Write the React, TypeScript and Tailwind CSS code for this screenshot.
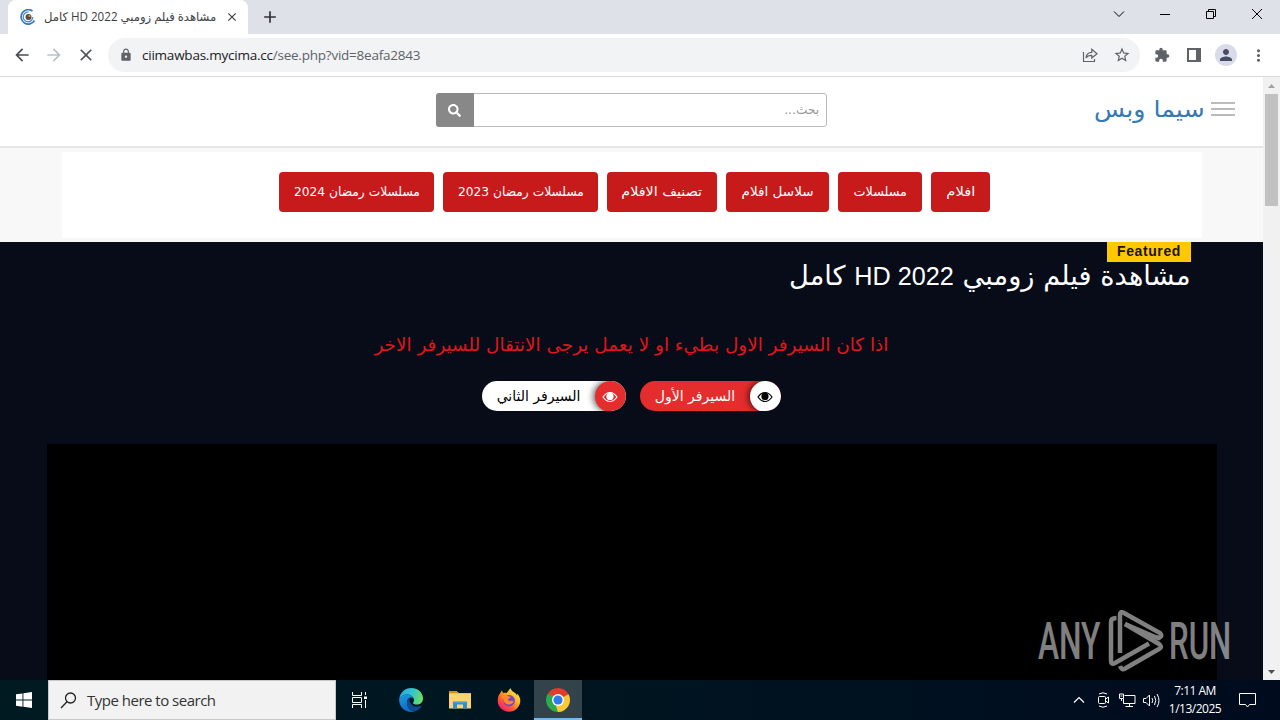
import type { ReactNode } from "react";
import {
  MdAdd,
  MdArrowBack,
  MdArrowForward,
  MdClose,
  MdExtension,
  MdLock,
  MdMoreVert,
  MdPerson,
  MdStarBorder,
} from "react-icons/md";
import { FaSearch } from "react-icons/fa";

const navLinks = [
  { label: "افلام", box: "w-[59px]", text: "scale-x-[1.13]" },
  { label: "مسلسلات", box: "w-[84px]", text: "scale-x-[0.98]" },
  { label: "سلاسل افلام", box: "w-[103px]", text: "scale-x-[1.04]" },
  { label: "تصنيف الافلام", box: "w-[110px]", text: "scale-x-[1.1]" },
  { label: "مسلسلات رمضان 2023", box: "w-[155px]", text: "scale-x-[0.94]" },
  { label: "مسلسلات رمضان 2024", box: "w-[155px]", text: "scale-x-[0.94]" },
];

const EyeIcon = () => (
  <svg width="16" height="12" viewBox="0 0 16 12" fill="none">
    <path
      d="M1 6Q4 1.500 8 1.500T15 6Q12 10.500 8 10.500T1 6Z"
      stroke="currentColor"
      strokeWidth="1.2"
    />
    <circle cx="8" cy="5.400" r="3.600" fill="currentColor" />
  </svg>
);

const EdgeIcon = () => (
  <svg width="24" height="24" viewBox="0 0 24 24">
    <defs>
      <linearGradient id="edge-top" x1="0" y1="0.3" x2="1" y2="0.5">
        <stop offset="0" stopColor="#2aa9e6" />
        <stop offset="0.55" stopColor="#36c5c8" />
        <stop offset="1" stopColor="#6ee05c" />
      </linearGradient>
      <linearGradient id="edge-low" x1="0" y1="0" x2="0.4" y2="1">
        <stop offset="0" stopColor="#1b9de2" />
        <stop offset="1" stopColor="#1267c0" />
      </linearGradient>
    </defs>
    <path
      d="M0.2 11C1 4.500 6 0 12.200 0C19 0 24 4.800 24 10.400C24 14.200 21 16.600 17.800 16.600C15.500 16.600 14 15.800 14 15C14 14.400 15 14 15 12C15 9 11.800 6.500 8 6.500C4.500 6.500 1.600 8.300 0.200 11Z"
      fill="url(#edge-top)"
    />
    <path
      d="M0.200 11C1.800 7.800 5 6.500 8 6.500C11.500 6.500 14.400 8.500 14.900 11C13.800 9.800 12.500 9.400 11.500 9.600C9 10.100 7.900 12.500 8 15C8.200 19.500 11.500 23 16 23.300C14.800 23.800 13.400 24 12 24C5.300 24 -0.400 18.500 0.200 11Z"
      fill="url(#edge-low)"
    />
    <path
      d="M8 15C7.900 12.500 9 10.500 10.600 9.900C9.500 14 13 18.600 18 18.700C20 18.700 21.300 18 22.300 17.500C22.700 17.400 22.900 17.700 22.700 18C21.300 20.600 19 22.600 16 23.300C11.500 23 8.200 19.500 8 15Z"
      fill="#0c4c91"
    />
  </svg>
);

const FolderIcon = () => (
  <svg width="22" height="20" viewBox="0 0 22 20">
    <path d="M0 1.500H8L10 3H22V8H0Z" fill="#e8a33d" />
    <rect y="3.500" width="22" height="15" fill="#fbd66f" />
    <path d="M0 1H8V3H0Z" fill="#d98e1e" />
    <path d="M4 18.500V12.500Q4 11 5.500 11H16.500Q18 11 18 12.500V18.500H14V14.500H8V18.500Z" fill="#2f8fd4" />
    <path d="M5 11H17V12.500H5Z" fill="#69b6ea" />
  </svg>
);

const FirefoxIcon = () => (
  <svg width="24" height="24" viewBox="0 0 24 24">
    <defs>
      <linearGradient id="fox" x1="0.85" y1="0.1" x2="0.15" y2="0.95">
        <stop offset="0" stopColor="#fff04a" />
        <stop offset="0.35" stopColor="#ffb01f" />
        <stop offset="0.65" stopColor="#ff5b32" />
        <stop offset="1" stopColor="#f0186c" />
      </linearGradient>
    </defs>
    <path
      d="M3.600 4.500C4 3.500 4.600 2.700 5 2.400C5.100 3.500 5.600 4.300 6.300 5C7.500 4.600 8.500 4.600 9.400 4.900C11 3.800 11.500 2 13.800 0.300C14 2.200 15.300 3.400 17 4.300C19.200 5.600 19.500 6.500 20.100 7.800C20.300 7 20.200 6.300 20 5.500C22.200 7.600 23.400 10.300 23.300 13C23 19.200 18 23.700 12 23.700C5.600 23.700 0.700 18.800 0.700 12.500C0.700 9.300 1.800 6.700 3.600 4.500Z"
      fill="url(#fox)"
    />
    <circle cx="12.200" cy="12.800" r="5.700" fill="#7642d8" />
    <path
      d="M4.500 9C6.500 7 9.300 7 11 8C11.800 8.500 12.700 8.500 13.700 8.700C13.500 10 12.300 10.400 11 10.800C10.700 12.500 12.300 13.300 14 12.800C15.600 12.500 16.600 13 16.400 13.700C15.500 15.800 13 17 10.500 16.300C7.200 15.500 6.200 12.800 6.700 10.500Z"
      fill="#ff8a22"
    />
  </svg>
);

const ChromeIcon = () => (
  <svg width="24" height="24" viewBox="0 0 24 24">
    <path d="M12 12L1.608 6A12 12 0 0 1 22.392 6Z" fill="#e33b2e" />
    <path d="M12 12L22.392 6A12 12 0 0 1 12 24Z" fill="#fcc934" />
    <path d="M12 12L12 24A12 12 0 0 1 1.608 6Z" fill="#2da94f" />
    <path d="M12 6.500H22.650L22.392 6L12 5Z" fill="#e33b2e" />
    <path d="M16.760 14.750L12 24L10 18Z" fill="#fcc934" />
    <path d="M7.240 14.750L1.608 6L9 8Z" fill="#2da94f" />
    <circle cx="12" cy="12" r="6" fill="#fff" />
    <circle cx="12" cy="12" r="4.600" fill="#2f7bea" />
  </svg>
);

const AppSlot = ({ children, active }: { children: ReactNode; active?: boolean }) => (
  <div
    className={
      active
        ? "ml-0.5 flex h-full w-12 items-center justify-center border-b-2 border-[#76b9ed] bg-[#32434b] pt-0.5"
        : "flex h-full w-[49px] items-center justify-center"
    }
  >
    {children}
  </div>
);

const TabStrip = () => (
  <div className="flex h-[34px] shrink-0 items-stretch bg-[#dee1e8] pl-2">
    <div className="flex w-60 items-center rounded-t-lg bg-white pl-3">
      <svg width="16" height="16" viewBox="0 0 16 16" fill="none">
        <path d="M12.500 2A7.200 7.200 0 1 0 14.500 11.500" stroke="#3478c9" strokeWidth="1.700" />
        <path d="M8.500 3.200A4.800 4.800 0 1 0 12.800 8" stroke="#4b8bd4" strokeWidth="1.300" />
        <circle cx="8.500" cy="8" r="3" fill="#5a4940" />
        <circle cx="9.500" cy="7" r="1" fill="#d8a878" />
      </svg>
      <div className="ml-2 flex w-[172px] justify-end text-[#3c4043]">
        <span
          dir="rtl"
          className="origin-right scale-x-[0.967] whitespace-nowrap font-['Open_Sans','DejaVu_Sans',sans-serif] text-xs"
        >
          مشاهدة فيلم زومبي 2022 HD كامل
        </span>
      </div>
      <MdClose className="ml-[9px] size-[14px] text-[#3c4043]" />
    </div>
    <MdAdd className="ml-3 mt-[7px] size-5 text-[#303236]" />
    <div className="ml-auto flex items-center gap-[34px] pr-[17px] pb-1.5 text-black">
      <svg width="12" height="12" viewBox="0 0 12 12" fill="none" stroke="currentColor">
        <path d="M1 3.500L6 8.500L11 3.500" />
      </svg>
      <svg width="12" height="12" viewBox="0 0 12 12" fill="none" stroke="currentColor">
        <path d="M1 6.500H11" />
      </svg>
      <svg width="12" height="12" viewBox="0 0 12 12" fill="none" stroke="currentColor">
        <path d="M1.500 3.500H8.500V10.500H1.500ZM3.500 3.500V1.500H10.500V8.500H8.500" />
      </svg>
      <svg width="12" height="12" viewBox="0 0 12 12" fill="none" stroke="currentColor">
        <path d="M1 1L11 11M11 1L1 11" />
      </svg>
    </div>
  </div>
);

const Toolbar = () => (
  <div className="flex h-[43px] shrink-0 items-center border-b border-[#d7d9dc] bg-white pl-3 text-[#5f6368]">
    <MdArrowBack className="size-5 text-[#4b4e52]" />
    <MdArrowForward className="ml-3 size-5 text-[#bdc1c6]" />
    <MdClose className="ml-3 size-5 text-[#505357]" />
    <div className="ml-3 flex h-[34px] w-[1032px] items-center rounded-full bg-[#f1f3f4] pl-[11px] pr-[9px]">
      <MdLock className="size-[14px]" />
      <div className="ml-[9px] whitespace-nowrap font-['Open_Sans',sans-serif] text-[13.5px] tracking-[-0.23px]">
        <span className="text-[#202124]">ciimawbas.mycima.cc</span>/see.php?vid=8eafa2843
      </div>
      <svg
        className="ml-auto"
        width="16"
        height="16"
        viewBox="0 0 16 16"
        fill="none"
        stroke="currentColor"
        strokeWidth="1.200"
      >
        <path d="M1.500 5V14.500H12.500V12" />
        <path d="M4 11C4.300 7.500 6.500 5.500 9.800 5.400V2.300L15 6.800L9.800 11V8.300C7.300 8.200 5.300 9 4 11Z" />
      </svg>
      <MdStarBorder className="ml-[15px] size-[18px]" />
    </div>
    <MdExtension className="ml-[14px] size-4" />
    <svg className="ml-[17px]" width="14" height="14" viewBox="0 0 14 14">
      <path d="M0 0H14V14H0ZM2 2V12H9V2Z" fill="currentColor" fillRule="evenodd" />
    </svg>
    <div className="ml-[14px] flex size-[22px] items-center justify-center rounded-full bg-[#d9dce8]">
      <MdPerson className="size-[18px] text-[#474b63]" />
    </div>
    <MdMoreVert className="ml-3 size-[19px]" />
  </div>
);

const SiteHeader = () => (
  <header className="flex h-[71px] items-start border-b-2 border-[#e7e7e7] bg-white pt-4">
    <div className="ml-[436px] flex h-[34px] w-[391px] overflow-hidden rounded-[3px]">
      <div className="flex w-[38px] items-center justify-center bg-[#888] pr-px">
        <FaSearch className="size-[13px] text-white" />
      </div>
      <div className="flex flex-1 items-center justify-end rounded-r-[3px] border border-l-0 border-[#bbb] pr-[7px]">
        <span
          dir="rtl"
          className="origin-right scale-x-[0.94] font-['DejaVu_Sans',sans-serif] text-[13px] text-[#999]"
        >
          بحث...
        </span>
      </div>
    </div>
    <div className="ml-auto mr-7 flex h-8 items-center gap-1.5">
      <span
        dir="rtl"
        className="origin-right scale-x-[1.1] whitespace-nowrap font-['DejaVu_Sans',sans-serif] text-[23px] leading-8 text-[#337ab7]"
      >
        سيما وبس
      </span>
      <div className="flex w-6 flex-col gap-1">
        <div className="h-0.5 bg-[#bbb]" />
        <div className="h-0.5 bg-[#bbb]" />
        <div className="h-0.5 bg-[#bbb]" />
      </div>
    </div>
  </header>
);

const SiteNav = () => (
  <div className="h-[94px] bg-[#f8f8f8] pl-[62px] pr-[61px] pt-1">
    <nav dir="rtl" className="flex h-[86px] justify-start gap-[9px] bg-white pr-[212px] pt-5">
      {navLinks.map((link) => (
        <div
          key={link.label}
          className={`flex h-10 shrink-0 items-center justify-center rounded bg-[#c71a1b] text-white ${link.box}`}
        >
          <span
            className={`whitespace-nowrap font-['DejaVu_Sans',sans-serif] text-[13px] ${link.text}`}
          >
            {link.label}
          </span>
        </div>
      ))}
    </nav>
  </div>
);

const Movie = () => (
  <main className="flex flex-1 flex-col bg-[#070c18] text-white">
    <div className="mr-[72px] flex flex-col items-end">
      <div className="flex h-5 w-[84px] items-center justify-center bg-[#ffc800] pb-0.5 font-['Liberation_Sans',sans-serif] text-sm font-bold tracking-[0.6px] text-[#1b1305]">
        Featured
      </div>
      <h1
        dir="rtl"
        className="h-7 origin-right scale-x-[1.01] whitespace-nowrap font-['DejaVu_Sans',sans-serif] text-[27px] leading-7"
      >
        مشاهدة فيلم زومبي{" "}
        <span className="font-['Liberation_Sans',sans-serif] text-[25px]">2022 HD</span> كامل
      </h1>
    </div>
    <p
      dir="rtl"
      className="mt-[41px] h-7 whitespace-nowrap text-center font-['DejaVu_Sans',sans-serif] text-lg leading-7 text-[#e3141b]"
    >
      <span className="inline-block scale-x-[1.022]">
        اذا كان السيرفر الاول بطيء او لا يعمل يرجى الانتقال للسيرفر الاخر
      </span>
    </p>
    <div className="mt-[22px] flex h-[30px] justify-center gap-[14px] font-['DejaVu_Sans',sans-serif] text-sm">
      <div className="flex w-36 overflow-hidden rounded-full bg-white text-black">
        <div dir="rtl" className="flex flex-1 items-center justify-center">
          <span className="whitespace-nowrap">السيرفر الثاني</span>
        </div>
        <div className="flex size-[31px] items-center justify-center rounded-full bg-[#e52d2d] pr-px text-white shadow-[-2px_0_6px_#0009]">
          <EyeIcon />
        </div>
      </div>
      <div className="flex w-[141px] overflow-hidden rounded-full bg-[#e52d2d]">
        <div dir="rtl" className="flex flex-1 items-center justify-center">
          <span className="whitespace-nowrap">السيرفر الأول</span>
        </div>
        <div className="flex size-[31px] items-center justify-center rounded-full bg-white pr-px text-black shadow-[-2px_0_6px_#0009]">
          <EyeIcon />
        </div>
      </div>
    </div>
    <div className="mx-auto mt-[33px] w-[1170px] flex-1 bg-black" />
  </main>
);

const Scrollbar = () => (
  <div className="flex w-[17px] flex-col items-center bg-[#f1f1f1]">
    <svg width="17" height="17" viewBox="0 0 17 17" fill="#a3a3a3">
      <path d="M5 11H12L8.500 7Z" />
    </svg>
    <div className="h-[112px] w-[13px] bg-[#c1c1c1]" />
    <svg className="mt-auto" width="17" height="17" viewBox="0 0 17 17" fill="#505050">
      <path d="M5 7H12L8.500 11Z" />
    </svg>
  </div>
);

const Watermark = () => (
  <div className="absolute left-[1038px] top-[609px] flex h-16 w-[194px] items-center justify-between font-['Roboto',sans-serif] text-[52px] font-medium leading-none text-white opacity-50">
    <span className="w-[65px] origin-left scale-x-[0.61] pt-0.5">ANY</span>
    <svg width="56" height="62" viewBox="0 0 56 62" fill="none" stroke="currentColor" strokeWidth="4.500">
      <path d="M8.500 8Q3 8 3 12V51Q3 55 7 53L41 33.500" />
      <path d="M12 43V5Q12 0.500 16 3L52 23Q55 26 51 28L47 27L17 14" />
      <path d="M17 14L51 34Q55 37 51 39L18 58Q14 61 12 56" />
    </svg>
    <span className="w-[63px] origin-left scale-x-[0.6] pt-0.5">RUN</span>
  </div>
);

const Taskbar = () => (
  <div className="flex h-10 shrink-0 items-center bg-linear-to-r from-[#001a22] via-[#001420] to-[#000b1e] text-white">
    <div className="flex w-12 items-center justify-center">
      <svg width="16" height="16" viewBox="0 0 16 16" fill="#fff">
        <path d="M0 2.300L6.500 1.400V7.600H0ZM7.400 1.300L16 0V7.600H7.400ZM0 8.500H6.500V14.700L0 13.800ZM7.400 8.500H16V16L7.400 14.800Z" />
      </svg>
    </div>
    <div className="flex h-10 w-72 items-center border border-[#c8c8c8] bg-[#f2f2f2] pl-[11px] text-[#333]">
      <svg width="17" height="17" viewBox="0 0 17 17" fill="none" stroke="#222" strokeWidth="1.300">
        <circle cx="10.500" cy="6" r="5" />
        <path d="M7 9.700L1 16" />
      </svg>
      <span className="ml-2.5 font-['Open_Sans',sans-serif] text-[15px] tracking-[-0.5px]">
        Type here to search
      </span>
    </div>
    <AppSlot>
      <svg className="mr-0.5" width="17" height="16" viewBox="0 0 17 16" fill="none" stroke="#fff">
        <path d="M1.500 0V3.500H10.500V0M1.500 5.500H10.500V10.500H1.500ZM1.500 16V12.500H10.500V16M14.500 0V3M14.500 8V16" />
        <path d="M13 4.500H16V7H13Z" fill="#fff" stroke="none" />
      </svg>
    </AppSlot>
    <AppSlot>
      <div className="pl-0.5">
        <EdgeIcon />
      </div>
    </AppSlot>
    <AppSlot>
      <div className="pl-0.5">
        <FolderIcon />
      </div>
    </AppSlot>
    <AppSlot>
      <div className="pl-0.5">
        <FirefoxIcon />
      </div>
    </AppSlot>
    <AppSlot active>
      <ChromeIcon />
    </AppSlot>
    <div className="ml-auto flex h-full items-center pr-6">
      <svg width="12" height="8" viewBox="0 0 12 8" fill="none" stroke="#fff" strokeWidth="1.200">
        <path d="M1 6.500L6 1.500L11 6.500" />
      </svg>
      <svg className="ml-3" width="13" height="16" viewBox="0 0 13 16" fill="none" stroke="#fff">
        <path d="M1.500 5.500Q1.500 4.500 2.500 4.500H7.500Q8.500 4.500 8.500 5.500V10.500Q8.500 11.500 7.500 11.500H2.500Q1.500 11.500 1.500 10.500ZM8.500 7L11.500 5V11L8.500 9M2 2Q6 -0.500 10 2M2 14Q6 16.500 10 14" />
      </svg>
      <svg className="ml-[9px]" width="17" height="15" viewBox="0 0 17 15" fill="none" stroke="#fff">
        <path d="M5.500 2.500H16V10.500H4.500V6M10.500 10.500V13.500M6.500 13.500H14M0.500 1V5.500H4.500V1ZM1.500 3H3.500M2.500 5.500V8" />
      </svg>
      <svg className="ml-[7px]" width="17" height="15" viewBox="0 0 17 15" fill="none" stroke="#fff">
        <path d="M0.500 5.500H3L6.500 2V13L3 9.500H0.500ZM9 5Q10.500 7.500 9 10M11.500 3Q14 7.500 11.500 12M14 1Q18 7.500 14 14" />
      </svg>
      <div className="ml-2 flex w-[54px] flex-col items-center whitespace-nowrap font-['Open_Sans',sans-serif] text-xs leading-[18px] tracking-[-0.5px]">
        <span>7:11 AM</span>
        <span>1/13/2025</span>
      </div>
      <svg className="ml-[17px]" width="17" height="17" viewBox="0 0 17 17" fill="none" stroke="#fff">
        <path d="M0.500 1.500H16.500V12.500H10.500L8.500 15L6.500 12.500H0.500Z" />
      </svg>
    </div>
  </div>
);

const App = () => (
  <div className="relative flex h-[720px] w-[1280px] flex-col overflow-hidden">
    <TabStrip />
    <Toolbar />
    <div className="flex min-h-0 flex-1">
      <div className="flex w-[1263px] flex-col">
        <SiteHeader />
        <SiteNav />
        <Movie />
      </div>
      <Scrollbar />
    </div>
    <Taskbar />
    <Watermark />
  </div>
);

export default App;
